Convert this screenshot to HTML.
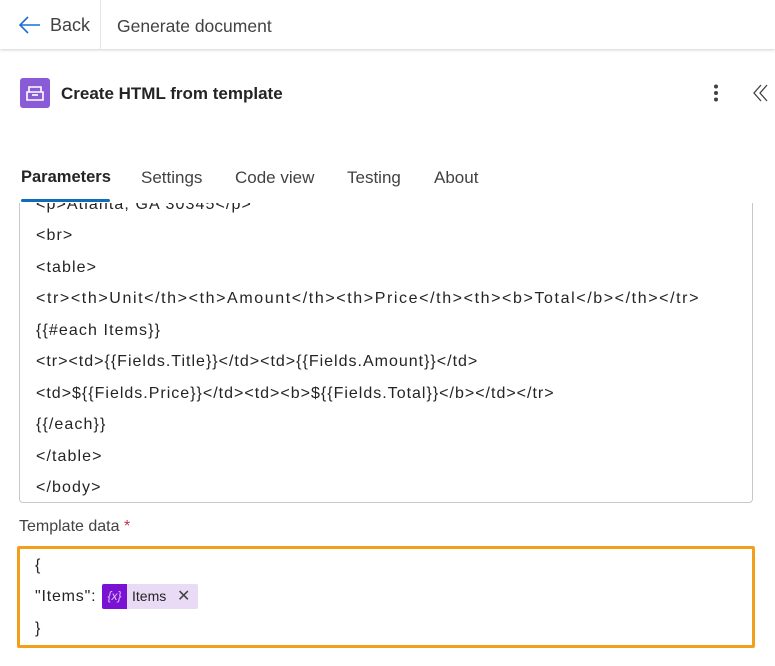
<!DOCTYPE html>
<html><head><style>
body{margin:0;width:775px;height:666px;background:#fff;font-family:"Liberation Sans",sans-serif;color:#242424;position:relative;overflow:hidden}
.a{position:absolute;white-space:nowrap}
.hdr{position:absolute;left:0;top:0;width:775px;height:49px;background:#fff;box-shadow:0 1px 3px rgba(0,0,0,.18);z-index:2}
.code{position:absolute;left:19px;top:190px;width:732px;height:312px;border:1px solid #c8c8c8;border-top:none;border-radius:0 0 4px 4px;overflow:hidden}
.code div{position:absolute;left:16px;font-size:16px;color:#242424;letter-spacing:1.1px}
</style></head><body>
<div class="hdr">
<svg class="a" style="left:19px;top:16px" width="22" height="18" viewBox="0 0 22 18"><path d="M9 1L1 9L9 17M1 9H21" fill="none" stroke="#1a6fd6" stroke-width="1.6"/></svg>
<div class="a" style="left:50px;top:15px;font-size:18px;color:#424242">Back</div>
<div class="a" style="left:100px;top:0;width:1px;height:49px;background:#e6e6e6"></div>
<div class="a" style="left:117px;top:16px;font-size:17.5px;color:#424242">Generate document</div>
</div>
<div class="a" style="left:20px;top:78px;width:30px;height:30px;background:#8a5bd6;border-radius:3px"></div>
<svg class="a" style="left:20px;top:78px" width="30" height="30" viewBox="0 0 30 30"><path d="M9 9h12v5H9z M7 14h16v8H7z" fill="none" stroke="#fff" stroke-width="1.6"/><path d="M12 17h6" stroke="#fff" stroke-width="1.6"/></svg>
<div class="a" style="left:61px;top:84px;font-size:17px;font-weight:bold;color:#242424">Create HTML from template</div>
<svg class="a" style="left:712px;top:84px" width="8" height="18"><circle cx="4" cy="2.5" r="2" fill="#424242"/><circle cx="4" cy="9" r="2" fill="#424242"/><circle cx="4" cy="15.5" r="2" fill="#424242"/></svg>
<svg class="a" style="left:753px;top:84px" width="16" height="18" viewBox="0 0 16 18"><path d="M8 1L1 9L8 17M14 1L7 9L14 17" fill="none" stroke="#424242" stroke-width="1.3"/></svg>
<div class="code">
<div style="top:6px">&lt;p&gt;Atlanta, GA 30345&lt;/p&gt;</div>
<div style="top:37px">&lt;br&gt;</div>
<div style="top:69px">&lt;table&gt;</div>
<div style="top:100px;letter-spacing:1.6px">&lt;tr&gt;&lt;th&gt;Unit&lt;/th&gt;&lt;th&gt;Amount&lt;/th&gt;&lt;th&gt;Price&lt;/th&gt;&lt;th&gt;&lt;b&gt;Total&lt;/b&gt;&lt;/th&gt;&lt;/tr&gt;</div>
<div style="top:132px">{{#each Items}}</div>
<div style="top:163px;letter-spacing:1px">&lt;tr&gt;&lt;td&gt;{{Fields.Title}}&lt;/td&gt;&lt;td&gt;{{Fields.Amount}}&lt;/td&gt;</div>
<div style="top:195px;letter-spacing:1px">&lt;td&gt;${{Fields.Price}}&lt;/td&gt;&lt;td&gt;&lt;b&gt;${{Fields.Total}}&lt;/b&gt;&lt;/td&gt;&lt;/tr&gt;</div>
<div style="top:226px">{{/each}}</div>
<div style="top:258px">&lt;/table&gt;</div>
<div style="top:289px">&lt;/body&gt;</div>
</div>
<div class="a" style="left:0;top:150px;width:775px;height:53px;background:#fff"></div>
<div class="a" style="left:21px;top:168px;font-size:16.5px;font-weight:bold;color:#242424">Parameters</div>
<div class="a" style="left:141px;top:168px;font-size:17px;color:#424242">Settings</div>
<div class="a" style="left:235px;top:168px;font-size:17px;color:#424242">Code view</div>
<div class="a" style="left:347px;top:168px;font-size:17px;color:#424242">Testing</div>
<div class="a" style="left:434px;top:168px;font-size:17px;color:#424242">About</div>
<div class="a" style="left:21px;top:199px;width:89px;height:3px;background:#0f6cbd;border-radius:2px"></div>
<div class="a" style="left:19px;top:518px;font-size:16px;color:#424242">Template data <span style="color:#c4314b">*</span></div>
<div class="a" style="left:17px;top:546px;width:732px;height:96px;border:3px solid #f2a01b;border-radius:2px"></div>
<div class="a" style="left:35px;top:557px;font-size:16px">{</div>
<div class="a" style="left:35px;top:588px;font-size:16px;letter-spacing:0.8px">"Items":</div>
<div class="a" style="left:102px;top:584px;width:96px;height:25px;background:#e9dbf6;border-radius:2px"></div>
<div class="a" style="left:102px;top:584px;width:25px;height:25px;background:#7a12d4;border-radius:2px 0 0 2px;color:#e0c8f8;font-size:12px;text-align:center;line-height:24px"><i>{x}</i></div>
<div class="a" style="left:132px;top:588px;font-size:14px">Items</div>
<div class="a" style="left:177px;top:586px;font-size:16px;color:#424242">✕</div>
<div class="a" style="left:35px;top:620px;font-size:16px">}</div>
</body></html>
